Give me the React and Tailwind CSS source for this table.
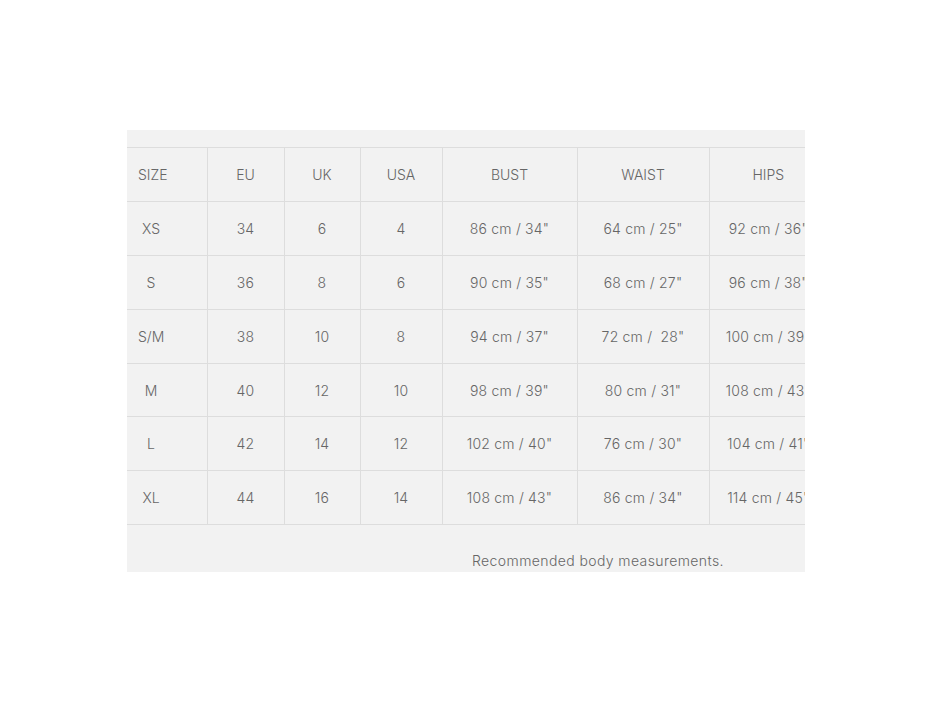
const columns = [
  { label: 'EU', width: 'w-[77px]' },
  { label: 'UK', width: 'w-[76px]' },
  { label: 'USA', width: 'w-[82px]' },
  { label: 'BUST', width: 'w-[135px]' },
  { label: 'WAIST', width: 'w-[132px]' },
  { label: 'HIPS', width: 'w-[118px]' }
];

const rows = [
  ['XS', '34', '6', '4', '86 cm / 34"', '64 cm / 25"', '92 cm / 36"'],
  ['S', '36', '8', '6', '90 cm / 35"', '68 cm / 27"', '96 cm / 38"'],
  ['S/M', '38', '10', '8', '94 cm / 37"', '72 cm /  28"', '100 cm / 39"'],
  ['M', '40', '12', '10', '98 cm / 39"', '80 cm / 31"', '108 cm / 43"'],
  ['L', '42', '14', '12', '102 cm / 40"', '76 cm / 30"', '104 cm / 41"'],
  ['XL', '44', '16', '14', '108 cm / 43"', '86 cm / 34"', '114 cm / 45"']
];

const App = () => {
  return (
    <main className="min-h-[705px] bg-white pl-[127px] pt-[130px] font-['Inter','Noto_Sans',sans-serif] font-light text-[14px] text-[#666]">
      <div className="w-[678px] overflow-hidden bg-[#f2f2f2] pt-[17px]">
        <table className="w-[700px] table-fixed border-collapse">
          <thead>
            <tr className="h-[54px] border-t border-b border-[#dddddd]">
              <th className="w-[80px] border-r border-[#dddddd] pl-[11px] text-left font-light">
                <span className="inline-block w-[26px] text-center">SIZE</span>
              </th>
              {columns.map((col) => (
                <th key={col.label} className={`${col.width} border-r border-[#dddddd] text-center font-light last:border-r-0`}>
                  {col.label}
                </th>
              ))}
            </tr>
          </thead>
          <tbody>
            {rows.map((row, r) => (
              <tr key={row[0]} className={`${r === 3 ? 'h-[53px]' : 'h-[54px]'} border-b border-[#dddddd]`}>
                <td className="border-r border-[#dddddd] pl-[11px] text-left">
                  <span className="inline-block w-[26px] text-center">{row[0]}</span>
                </td>
                {row.slice(1).map((cell, i) => (
                  <td key={i} className="whitespace-pre border-r border-[#dddddd] text-center tracking-[0.2px] last:border-r-0">
                    {cell}
                  </td>
                ))}
              </tr>
            ))}
          </tbody>
        </table>
        <p className="h-[47px] pl-[345px] pt-[27px] leading-[17px] tracking-[0.4px]">Recommended body measurements.</p>
      </div>
    </main>
  );
};

export default App;
